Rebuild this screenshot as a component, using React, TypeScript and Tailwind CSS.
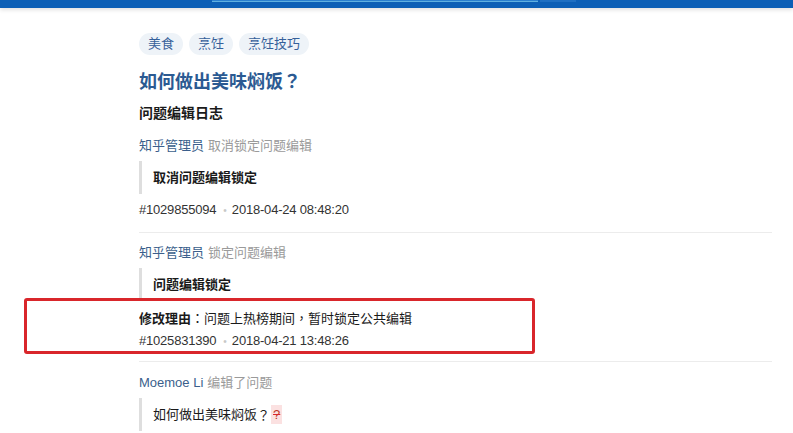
import React from 'react';

const font = { fontFamily: '"Liberation Sans", "Noto Sans CJK SC", sans-serif' };
const punct = { fontFamily: '"Noto Sans CJK TC", sans-serif' };

const Quote: React.FC<{ children: React.ReactNode; className?: string }> = ({ children, className = '' }) => (
  <div className={`flex items-center h-[33px] border-l-[3px] border-[#dedede] pl-[11px] text-[13px] text-[#1a1a1a] ${className}`}>
    {children}
  </div>
);

const Meta: React.FC<{ id: string; time: string; className?: string }> = ({ id, time, className = '' }) => (
  <div className={`flex items-center h-[20px] text-[13px] text-[#333] ${className}`}>
    <span className="tracking-[-0.2px]">{id}</span>
    <span className="ml-[7px] mr-[5px] text-[#c8c8c8] text-[10px]">•</span>
    <span className="tracking-[-0.2px]">{time}</span>
  </div>
);

const Actor: React.FC<{ name: string; action: string; className?: string }> = ({ name, action, className = '' }) => (
  <div className={`h-[20px] leading-[20px] text-[13px] ${className}`}>
    <span className="text-[#3b5f8c]">{name}</span>
    <span className="text-[#9a9a9a] ml-[4px]">{action}</span>
  </div>
);

export default function App() {
  return (
    <div className="w-[793px] h-[433px] overflow-hidden bg-white relative" style={font}>
      <header className="h-[8px] bg-[#0c5fb6] relative shadow-[0_2px_4px_rgba(0,0,0,0.12)]">
        <div className="absolute left-[212px] top-0 w-[326px] h-[2px] bg-[#2a80cf] border-b border-[#5fb0e0]" />
        <div className="absolute left-[540px] top-0 w-[36px] h-[2px] bg-[#1e6fc2]" />
      </header>

      <main className="pl-[139px] pr-[21px]">
        <div className="flex gap-[6px] mt-[25px]">
          {['美食', '烹饪', '烹饪技巧'].map((t) => (
            <span key={t} className="h-[22px] px-[9px] rounded-full bg-[#eef3f8] text-[#35609a] text-[13px] leading-[22px]">
              {t}
            </span>
          ))}
        </div>

        <h1 className="mt-[12px] h-[26px] overflow-hidden text-[18px] leading-[26px] font-bold text-[#2b5a92]">
          如何做出美味焖饭<span style={punct}>？</span>
        </h1>

        <h2 className="mt-[10px] h-[20px] text-[14px] leading-[20px] font-bold text-[#1a1a1a]">问题编辑日志</h2>

        <Actor name="知乎管理员" action="取消锁定问题编辑" className="mt-[13px]" />
        <Quote className="mt-[5px] font-bold">取消问题编辑锁定</Quote>
        <Meta id="#1029855094" time="2018-04-24 08:48:20" className="mt-[6px]" />

        <div className="mt-[12px] h-px bg-[#ececec]" />

        <Actor name="知乎管理员" action="锁定问题编辑" className="mt-[10px]" />
        <Quote className="mt-[5px] font-bold">问题编辑锁定</Quote>
        <div className="mt-[7px] h-[20px] leading-[20px] text-[13px] text-[#1a1a1a] overflow-hidden">
          <span className="font-bold">修改理由</span>
          <span style={punct}>：</span>问题上热榜期间<span style={punct}>，</span>暂时锁定公共编辑
        </div>
        <Meta id="#1025831390" time="2018-04-21 13:48:26" className="mt-[3px]" />

        <div className="mt-[10px] h-px bg-[#ececec]" />

        <Actor name="Moemoe Li" action="编辑了问题" className="mt-[11px]" />
        <Quote className="mt-[5px]">
          如何做出美味焖饭<span style={punct}>？</span>
          <span className="ml-[1px] px-[2px] bg-[#fbe1e1] text-[#c0392b] line-through decoration-[#d9262b]">?</span>
        </Quote>
      </main>

      <div className="absolute left-[24px] top-[298px] w-[511px] h-[56px] border-[3px] border-[#d9262b] rounded-[3px]" />
    </div>
  );
}
